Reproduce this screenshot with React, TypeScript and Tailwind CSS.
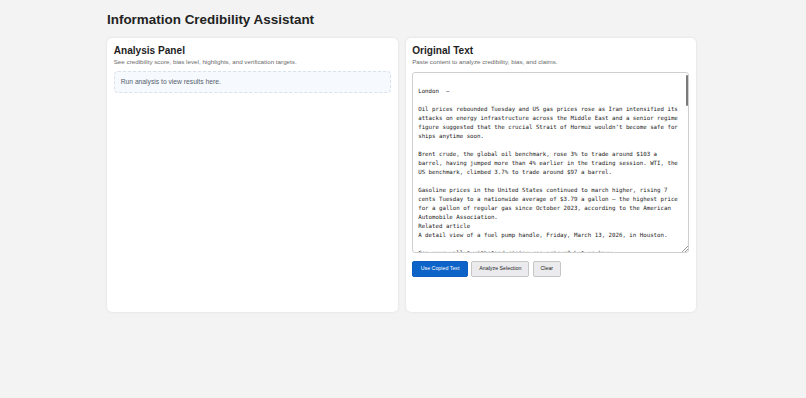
const ARTICLE = `
London  –

Oil prices rebounded Tuesday and US gas prices rose as Iran intensified its attacks on energy infrastructure across the Middle East and a senior regime figure suggested that the crucial Strait of Hormuz wouldn’t become safe for ships anytime soon.

Brent crude, the global oil benchmark, rose 3% to trade around $103 a barrel, having jumped more than 4% earlier in the trading session. WTI, the US benchmark, climbed 3.7% to trade around $97 a barrel.

Gasoline prices in the United States continued to march higher, rising 7 cents Tuesday to a nationwide average of $3.79 a gallon – the highest price for a gallon of regular gas since October 2023, according to the American Automobile Association.
Related article
A detail view of a fuel pump handle, Friday, March 13, 2026, in Houston.

Can your wallet withstand rising gas prices? Let us know.`;

function Panel({ title, subtitle, children }: { title: string; subtitle: string; children: React.ReactNode }) {
    return (
        <section className="h-[274px] rounded-[5px] bg-white px-[6.7px] pt-[6.7px] shadow-[0_0_3px_rgba(0,0,0,0.09)]">
            <h2 className="text-[10.1px] font-bold leading-[12px] text-[#1e1e1e]">{title}</h2>
            <p className="mt-[1.6px] text-[6.24px] leading-[8px] text-[#6b6b6b]">{subtitle}</p>
            {children}
        </section>
    );
}

export default function App() {
    return (
        <div className="min-h-[398px] bg-[#f3f3f3] font-['Liberation_Sans',Arial,sans-serif]">
            <div className="ml-[107px] w-[589px] pt-[12.3px]">
                <h1 className="text-[13.44px] font-bold leading-[16px] text-[#222]">
                    Information Credibility Assistant
                </h1>

                <div className="mt-[9.7px] grid grid-cols-2 gap-[8px]">
                    <Panel title="Analysis Panel" subtitle="See credibility score, bias level, highlights, and verification targets.">
                        <div className="mt-[5.2px] rounded-[4px] border border-dashed border-[#d9e2ec] bg-[#f6f9fd] px-[6px] py-[5px] text-[6.72px] leading-[10px] text-[#55606e]">
                            Run analysis to view results here.
                        </div>
                    </Panel>

                    <Panel title="Original Text" subtitle="Paste content to analyze credibility, bias, and claims.">
                        <div className="relative mt-[5.5px]">
                            <textarea
                                defaultValue={ARTICLE}
                                spellCheck={false}
                                className="block h-[181px] w-full resize-none overflow-hidden rounded-[3px] border border-[#cfcfcf] bg-white py-[4.8px] pl-[5px] pr-[9px] font-['DejaVu_Sans_Mono',monospace] text-[5.76px] leading-[9px] text-[#1a1a1a] outline-none"
                            />
                            {/* scrollbar thumb */}
                            <div className="absolute right-[1.5px] top-[3.5px] h-[31px] w-[2px] rounded-full bg-[#7a7a7a]" />
                            {/* resize grip */}
                            <svg className="absolute bottom-[1px] right-[1px]" width="6" height="6" viewBox="0 0 6 6">
                                <path d="M6 0L0 6M6 3L3 6" stroke="#9a9a9a" strokeWidth="1" />
                            </svg>
                        </div>

                        <div className="mt-[8.7px] flex gap-[3.5px]">
                            <button className="h-[16px] rounded-[2px] border border-[#0b5fc0] bg-[#0d63c7] px-[7.5px] text-[5.3px] font-medium text-white">
                                Use Copied Text
                            </button>
                            <button className="h-[16px] rounded-[2px] border border-[#c6c6c6] bg-[#ebebee] px-[6.8px] text-[5.3px] font-medium text-[#222]">
                                Analyze Selection
                            </button>
                            <button className="h-[16px] rounded-[2px] border border-[#c6c6c6] bg-[#ebebee] px-[6.8px] text-[5.3px] font-medium text-[#222]">
                                Clear
                            </button>
                        </div>
                    </Panel>
                </div>
            </div>
        </div>
    );
}
